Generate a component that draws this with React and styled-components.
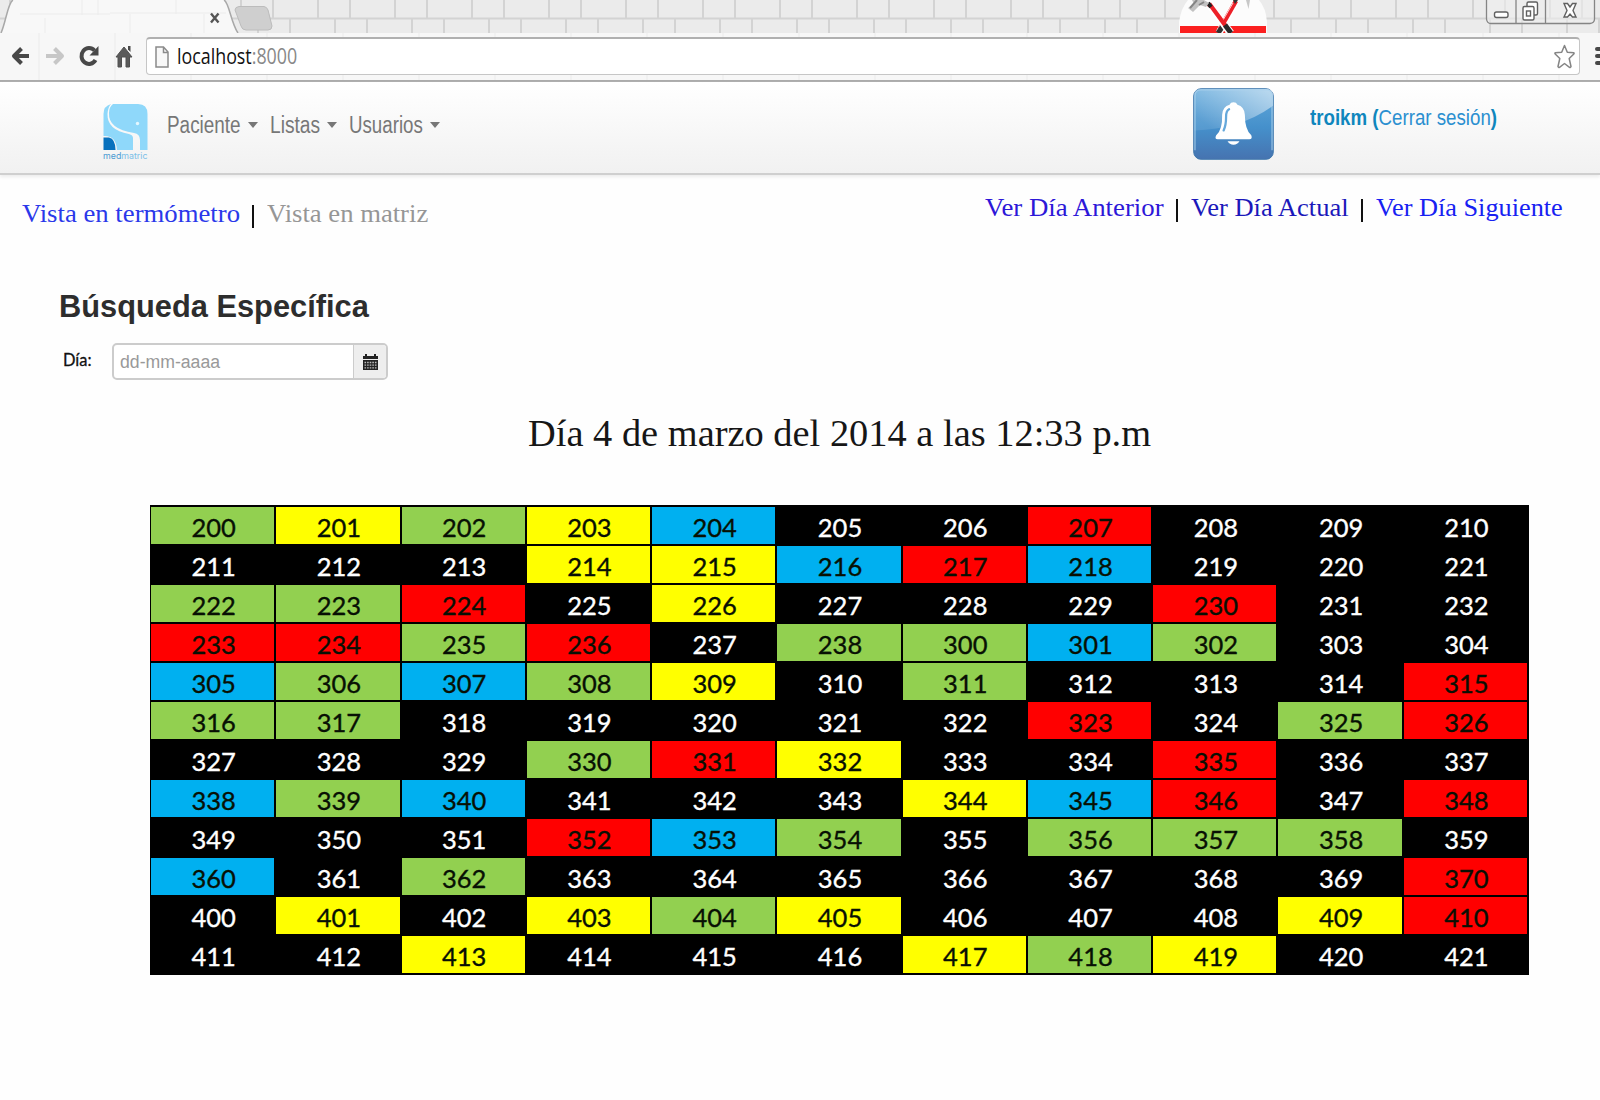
import React, { useLayoutEffect, useRef, useState } from "react";
import styled, { createGlobalStyle } from "styled-components";

const Global = createGlobalStyle`
  * { box-sizing: border-box; }
  body { margin: 0; background: #fefefe; overflow: hidden; }
`;

const ARIAL = '"Liberation Sans", Arial, sans-serif';
const SERIF = '"Palatino Linotype", "Liberation Serif", serif';
const HUMANIST = 'Lato, Calibri, sans-serif';

/* Text stretched or condensed to an exact width */
const FitBox = styled.span`
  display: inline-block;
  flex: none;
  width: ${(p) => p.$width}px;
  white-space: nowrap;
`;
const FitInner = styled.span`
  display: inline-block;
  transform-origin: 0 50%;
`;
function Fit({ width, children }) {
  const ref = useRef(null);
  const [scale, setScale] = useState(1);
  useLayoutEffect(() => {
    setScale(width / ref.current.offsetWidth);
  }, [width]);
  return (
    <FitBox $width={width}>
      <FitInner ref={ref} style={{ transform: `scaleX(${scale})` }}>{children}</FitInner>
    </FitBox>
  );
}

const Page = styled.div`
  width: 1600px;
  height: 1100px;
  overflow: hidden;
  display: flex;
  flex-direction: column;
  background: #fefefe;
`;

/* ---- browser chrome ---- */
const TabStrip = styled.div`
  height: 33px;
  flex: none;
  display: flex;
  background: #ebebeb;
`;
const StripArt = styled.svg`
  display: block;
  width: 1600px;
  height: 33px;
`;
const Toolbar = styled.div`
  height: 49px;
  flex: none;
  display: flex;
  align-items: flex-start;
  background: repeating-linear-gradient(90deg, transparent 0 38px, #f1f1f1 38px 40px, transparent 40px 76px), #f7f7f7;
  border-bottom: 2px solid #ababab;
`;
const NavIcons = styled.svg`
  width: 146px;
  height: 47px;
  flex: none;
`;
const Address = styled.div`
  width: 1434px;
  height: 38px;
  margin-top: 4px;
  flex: none;
  display: flex;
  align-items: center;
  justify-content: space-between;
  padding: 0 4px 0 8px;
  background: #fff;
  border: 1px solid #c6c6c6;
  border-top: 2px solid #b0b0b0;
  border-radius: 4px;
`;
const AddressLeft = styled.div`
  display: flex;
  align-items: center;
  gap: 8px;
`;
const Url = styled.div`
  padding-bottom: 3px;
  font: 22px/31px "Open Sans", "Noto Sans", sans-serif;
  color: #111;
`;
const Port = styled.span`
  color: #888;
`;
const MenuIcon = styled.div`
  display: flex;
  flex-direction: column;
  gap: 3px;
  margin: 14px 0 0 15px;
`;
const MenuBar = styled.i`
  width: 12px;
  height: 4px;
  border-radius: 2px;
  background: #484848;
`;

/* ---- application navbar ---- */
const Navbar = styled.nav`
  height: 93px;
  flex: none;
  display: flex;
  align-items: flex-start;
  justify-content: space-between;
  padding: 0 103px 0 103px;
  background: linear-gradient(#fff, #f1f1f1);
  border-bottom: 2px solid #cfcfcf;
  box-shadow: 0 2px 3px #ececec;
`;
const NavLeft = styled.div`
  display: flex;
`;
const Logo = styled.svg`
  width: 45px;
  height: 57px;
  margin-top: 21px;
`;
const Menu = styled.div`
  display: flex;
  align-items: flex-start;
  gap: 12px;
  margin: 28px 0 0 19px;
`;
const MenuItem = styled.div`
  display: flex;
  align-items: center;
  gap: ${(p) => p.$gap}px;
  font: 23px/30px ${ARIAL};
  color: #777;
`;
const Caret = styled.i`
  border: 5px solid transparent;
  border-top: 6px solid #777;
  border-bottom: 0;
`;
const NavRight = styled.div`
  display: flex;
  gap: 36px;
`;
const BellButton = styled.svg`
  width: 81px;
  height: 72px;
  margin-top: 6px;
`;
const Session = styled.div`
  margin-top: 21px;
  font: 22px/30px ${ARIAL};
  color: #0f86bd;
`;
const CloseLink = styled.span`
  color: #2a8fd0;
`;

/* ---- view links ---- */
const LinksRow = styled.div`
  display: flex;
  justify-content: space-between;
  align-items: flex-start;
  padding: 18px 37px 0 22px;
  height: 114px;
  flex: none;
`;
const LinkGroup = styled.div`
  display: flex;
  margin-top: ${(p) => p.$drop}px;
  font: 25px/30px ${SERIF};
`;
const ViewLink = styled.span`
  color: ${(p) => p.$color};
`;
const Bar = styled.i`
  width: 2px;
  height: 23px;
  margin: 6px 13px 0 12px;
  background: #111;
`;

/* ---- search ---- */
const Search = styled.section`
  height: 123px;
  flex: none;
  padding-left: 59px;
`;
const Heading = styled.h2`
  margin: 0;
  font: bold 31px/36px ${ARIAL};
  color: #2d2d2d;
`;
const Field = styled.div`
  display: flex;
  margin-top: 18px;
`;
const Label = styled.label`
  width: 53px;
  padding-left: 4px;
  font: 17px/34px ${HUMANIST};
  color: #111;
  -webkit-text-stroke: 0.3px;
`;
const DateBox = styled.div`
  display: flex;
  width: 276px;
  height: 37px;
  border: 2px solid #ccc;
  border-radius: 5px;
  overflow: hidden;
  background: #fff;
`;
const Placeholder = styled.div`
  flex: 1;
  padding-left: 6px;
  font: 18px/35px ${ARIAL};
  color: #999;
`;
const Addon = styled.div`
  width: 33px;
  display: flex;
  align-items: center;
  justify-content: center;
  background: #eee;
  border-left: 1px solid #ccc;
`;

/* ---- matrix ---- */
const Title = styled.h1`
  margin: 0 0 49px 528px;
  font: 37px/44px ${SERIF};
  color: #161616;
`;
const Matrix = styled.div`
  display: grid;
  grid-template-columns: repeat(11, 1fr);
  grid-template-rows: repeat(12, 1fr);
  flex: none;
  width: 1379px;
  height: 470px;
  margin-left: 150px;
  padding: 1px 1px 1px 0;
  background: #000;
`;
const fills = { g: "#92d050", y: "#ffff00", b: "#00b0f0", r: "#ff0000", k: "#000" };
const Cell = styled.div`
  display: flex;
  align-items: center;
  justify-content: center;
  padding-top: 2px;
  padding-left: 2px;
  border: solid #000;
  border-width: 1px 1px 1px 1px;
  background: ${(p) => fills[p.$kind]};
  color: ${(p) => (p.$kind === "k" ? "#fff" : "#081004")};
  font: 25.5px/32px ${HUMANIST};
  -webkit-text-stroke: 0.35px;
`;

const rows = [
  [200, "gygybkkrkkk"],
  [211, "kkkyybrbkkk"],
  [222, "ggrkykkkrkk"],
  [233, "rrgrkggbgkk"],
  [305, "bgbgykgkkkr"],
  [316, "ggkkkkkrkgr"],
  [327, "kkkgrykkrkk"],
  [338, "bgbkkkybrkr"],
  [349, "kkkrbgkgggk"],
  [360, "bkgkkkkkkkr"],
  [400, "kykygykkkyr"],
  [411, "kkykkkygykk"],
];
const roomAt = (start, i) => (start === 233 && i > 5 ? 294 + i : start + i);

function Strip() {
  const top = [];
  const low = [];
  for (let x = 10; x < 1600; x += 77) top.push(x, x + 32);
  for (let x = 27; x < 1600; x += 77) low.push(x, x + 32);
  return (
    <StripArt viewBox="0 0 1600 33">
      <g stroke="#d3d3d3" strokeWidth="2">
        {top.map((x) => <path key={"t" + x} d={`M${x} 0V18`} />)}
        {low.map((x) => <path key={"l" + x} d={`M${x} 19V33`} />)}
        <path d="M0 18.5H1600" />
      </g>
      <path d="M1 33 C6 22 8 2 13 0 H224 C229 2 231 23 238 33Z" fill="#f8f8f8" />
      <path d="M1 33 C6 22 8 2 13 0 M224 0 C229 2 231 23 238 33" fill="none" stroke="#a8a8a8" strokeWidth="1.5" />
      <path d="M20 14H110M110 13H226M45 18V33M82 0V15M98 0V15M130 14V33M176 0V14M204 14V33" stroke="#efefef" strokeWidth="1.5" />
      <path d="M211 13.500l7.500 9M218.500 13.500l-7.500 9" stroke="#555" strokeWidth="2.400" />
      <path d="M239 6.500H264Q267 7 268 10L272 26Q272 30 268 30H246Q242 30 241 26L235 10Q235 7 239 6.500Z" fill="#cfcfcf" stroke="#bcbcbc" />
      {/* crossed hammers badge */}
      <path d="M1179 33V22Q1181 8 1188 0H1259Q1266 8 1267 22V33Z" fill="#fcfcfc" />
      <path d="M1180 26H1266V33H1180Z" fill="#fb2020" />
      <path d="M1208 3L1231 33M1236 1L1219 33" stroke="#fff" strokeWidth="7" />
      <path d="M1236 1L1220 29" stroke="#ed2028" strokeWidth="4.500" />
      <path d="M1233 3L1219 27" stroke="#ffd5d5" strokeWidth="1" />
      <path d="M1223 26L1218 33" stroke="#303030" strokeWidth="5" />
      <path d="M1209 4L1226 27" stroke="#ed2028" strokeWidth="5" />
      <path d="M1208 7L1227 33" stroke="#fff" strokeWidth="2" />
      <path d="M1225 25L1231 33" stroke="#282828" strokeWidth="5" />
      <path d="M1208 3L1211 7" stroke="#222" strokeWidth="4" />
      <path d="M1192 0H1204L1209 3L1206 7L1200 5L1193 12L1188 8L1194 4Z" fill="#c2c2c2" />
      <path d="M1197 0L1190 8M1204 2L1199 5" stroke="#858585" strokeWidth="2" />
      <path d="M1246 0H1250L1248.500 9Z" fill="#c8c8c8" />
      <path d="M1233 0H1238L1235 4Z" fill="#333" />
      {/* window buttons */}
      <path d="M1486.500 0V19Q1487 23.500 1491 23.500H1590Q1594.500 23 1594.500 19V0M1516 0V23M1545.500 0V23" fill="#eeeeee" fillOpacity=".6" stroke="#858585" strokeWidth="1.300" />
      <g fill="#fff" stroke="#606060" strokeWidth="1.400">
        <rect x="1494.500" y="12" width="13.500" height="5.500" rx="2" />
        <rect x="1527" y="2" width="10.500" height="13" rx="1.500" />
        <rect x="1523" y="6.500" width="11" height="13.500" rx="1.500" />
        <rect x="1526.500" y="11" width="4" height="5" />
        <path d="M1564 3.500H1567.500L1570 7L1572.500 3.500H1576L1573 10.500L1576 17H1572.500L1570 14L1567.500 17H1564L1567 10.500Z" />
      </g>
    </StripArt>
  );
}

export default function App() {
  return (
    <Page>
      <Global />
      <TabStrip><Strip /></TabStrip>
      <Toolbar>
        <NavIcons viewBox="0 33 146 47">
          <path d="M29 56H15M21.500 48.500L14 56L21.500 63.500" fill="none" stroke="#484848" strokeWidth="4" strokeLinejoin="round" />
          <path d="M46 56H61M54.500 48.500L62 56L54.500 63.500" fill="none" stroke="#c7c7c7" strokeWidth="4" strokeLinejoin="round" />
          <path d="M94.500 50.500A7.500 8 0 1 0 95.500 60" fill="none" stroke="#484848" strokeWidth="4" />
          <path d="M98.500 46V55.500H89.500Z" fill="#484848" />
          <path d="M124 47L132 57H129.500V67H126V57H121.500V67H118V57H116Z" fill="#5a5a5a" stroke="#505050" />
          <path d="M128 46H130.500V52L128 49.500Z" fill="#484848" />
        </NavIcons>
        <Address>
          <AddressLeft>
            <svg width="14" height="22" viewBox="0 0 14 22">
              <path d="M1 1H8.500L13 6V21H1Z M8.500 1V6.500H13" fill="#f8f8f8" stroke="#8b8b8b" strokeWidth="1.500" />
            </svg>
            <Url><Fit width={120}>localhost<Port>:8000</Port></Fit></Url>
          </AddressLeft>
          <svg width="21" height="25" viewBox="0 0 21 25">
            <path d="M10.500 1.500L13.300 8.300L19.800 8.800Q20.300 9.500 19.800 10L15.200 14.500L17 22.500Q16.500 23.800 15.500 23.300L10.500 19.500L5.500 23.300Q4.500 23.800 4 22.500L5.800 14.500L1.200 10Q.7 9.500 1.200 8.800L7.700 8.300Z" fill="#fff" stroke="#858585" strokeWidth="1.500" strokeLinejoin="round" />
          </svg>
        </Address>
        <MenuIcon><MenuBar /><MenuBar /><MenuBar /></MenuIcon>
      </Toolbar>

      <Navbar>
        <NavLeft>
          <Logo viewBox="0 0 45 57">
            <path d="M10 1H35Q44.500 1 44.500 11V47H37V37Q37 31 31 30Q5 26 6 10Q6 4 10 1Z" fill="#8fd8fa" />
            <path d="M8 1Q.5 3 .5 11V33Q13 32 14 47H30V35Q30 32 26 31Q4 27 4.500 11Q5 4 8 1Z" fill="#8fd8fa" />
            <path d="M.5 34.500H6Q12.500 36 12.500 47H.5Z" fill="#0871bd" />
            <circle cx="34.500" cy="20.500" r="1.700" fill="#e4f7ff" />
            <text x="0" y="55.500" fontFamily="Inter, sans-serif" fontSize="8.500" fill="#7cc0e8" textLength="44.500" lengthAdjust="spacingAndGlyphs"><tspan fill="#4a9bd2">med</tspan>matric</text>
          </Logo>
          <Menu>
            <MenuItem $gap={7}><Fit width={74}>Paciente</Fit><Caret /></MenuItem>
            <MenuItem $gap={7}><Fit width={50}>Listas</Fit><Caret /></MenuItem>
            <MenuItem $gap={7}><Fit width={74}>Usuarios</Fit><Caret /></MenuItem>
          </Menu>
        </NavLeft>
        <NavRight>
          <BellButton viewBox="0 0 82 73" preserveAspectRatio="none">
            <defs>
              <linearGradient id="face" x1="0" y1="0" x2="0" y2="1">
                <stop offset="0" stopColor="#62a9db" /><stop offset=".55" stopColor="#4590cb" /><stop offset="1" stopColor="#4673b0" />
              </linearGradient>
              <linearGradient id="gloss" x1="0" y1=".6" x2="1" y2="0">
                <stop offset="0" stopColor="#fff" stopOpacity=".1" /><stop offset="1" stopColor="#fff" stopOpacity=".58" />
              </linearGradient>
            </defs>
            <rect x=".7" y=".7" width="80.600" height="71.600" rx="7.500" fill="url(#face)" stroke="#4179ad" />
            <path d="M1 8Q1 1 8 1H74Q81 1 81 8V18Q48 42 1 43Z" fill="url(#gloss)" />
            <path d="M2 63V8Q2 2 8 2H74Q80 2 80 8V63" fill="none" stroke="#acd3ed" strokeWidth="1.300" opacity=".75" />
            <path d="M37 17Q38 14.500 41 14.500Q44 14.500 45 17Q52 19 52.500 27Q52.500 42 59 48Q60.500 52 57 52H25Q21.500 52 23.500 48Q30 42 29.500 27Q30 19 37 17Z" fill="#fff" />
            <path d="M36.500 21.500Q33.500 23 33.500 29Q33.500 38 31 43" fill="none" stroke="#65a8db" strokeWidth="2.300" strokeLinecap="round" />
            <path d="M35 54H47Q45 57.500 41 57.500Q37 57.500 35 54Z" fill="#fff" />
          </BellButton>
          <Session><Fit width={187}><b>troikm (</b><CloseLink>Cerrar sesión</CloseLink><b>)</b></Fit></Session>
        </NavRight>
      </Navbar>

      <LinksRow>
        <LinkGroup $drop={6}>
          <ViewLink $color="#2a38ea"><Fit width={218}>Vista en termómetro</Fit></ViewLink>
          <Bar />
          <ViewLink $color="#969696"><Fit width={161}>Vista en matriz</Fit></ViewLink>
        </LinkGroup>
        <LinkGroup $drop={0}>
          <ViewLink $color="#2d17d8"><Fit width={179}>Ver Día Anterior</Fit></ViewLink>
          <Bar />
          <ViewLink $color="#1b18ba"><Fit width={158}>Ver Día Actual</Fit></ViewLink>
          <Bar />
          <ViewLink $color="#1721f2"><Fit width={187}>Ver Día Siguiente</Fit></ViewLink>
        </LinkGroup>
      </LinksRow>

      <Search>
        <Heading><Fit width={310}>Búsqueda Específica</Fit></Heading>
        <Field>
          <Label><Fit width={29}>Día:</Fit></Label>
          <DateBox>
            <Placeholder><Fit width={100}>dd-mm-aaaa</Fit></Placeholder>
            <Addon>
              <svg width="15" height="16" viewBox="0 0 15 16">
                <path d="M0 2H2V0H4V2H11V0H13V2H15V5H0ZM0 6H15V16H0Z" fill="#222" />
                <path d="M1.500 8.500H13.500M1.500 11.200H13.500M1.500 13.900H13.500" stroke="#bbb" strokeWidth="1.300" strokeDasharray="1.600 1" />
              </svg>
            </Addon>
          </DateBox>
        </Field>
      </Search>

      <Title><Fit width={623}>Día 4 de marzo del 2014 a las 12:33 p.m</Fit></Title>

      <Matrix>
        {rows.map(([start, kinds]) =>
          [...kinds].map((kind, i) => (
            <Cell key={roomAt(start, i)} $kind={kind}>{roomAt(start, i)}</Cell>
          ))
        )}
      </Matrix>
    </Page>
  );
}
